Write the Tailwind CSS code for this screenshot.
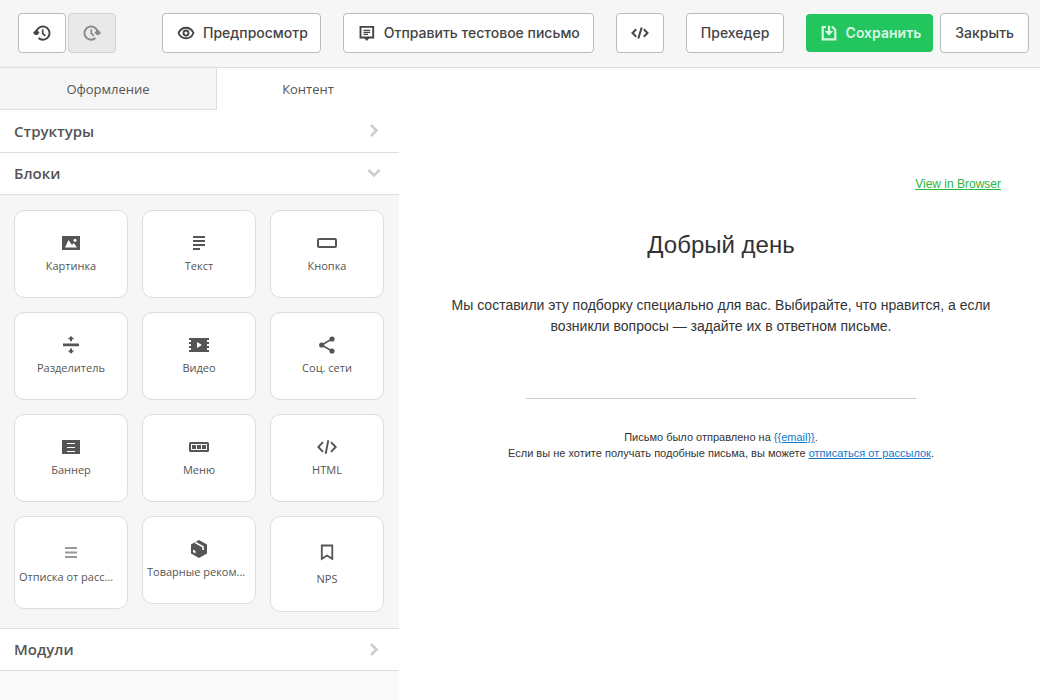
<!DOCTYPE html>
<html lang="ru">
  <head>
    <meta charset="UTF-8" />
    <meta name="viewport" content="width=device-width, initial-scale=1.0" />
    <title>Редактор письма</title>
    <script src="https://cdn.jsdelivr.net/npm/@tailwindcss/browser@4"></script>
  </head>
  <body class="min-h-screen flex flex-col bg-white font-['Open_Sans','Noto_Sans',sans-serif] text-[#555]">
    <!-- Toolbar -->
    <header class="flex items-center h-[68px] pl-[18px] pr-[11px] pb-[2px] bg-[#f6f6f6] border-b border-[#ddd] font-[Inter,sans-serif] text-sm font-medium text-[#444] whitespace-nowrap">
      <div class="flex gap-[2px]">
        <button aria-label="Отменить" class="w-12 h-10 flex items-center justify-center bg-white border border-[#bbb] rounded">
          <svg class="w-[18px] h-[18px]" viewBox="0 0 18 18" fill="none" stroke="currentColor" stroke-width="1.9"><path d="M3.300 9a6.600 6.600 0 1 1 2.200 5"/><path d="M9.700 5.300v4l2.600 2.600" stroke-width="1.600"/><path d="M0 8.500L3.300 5.800 6.500 8.500 4.300 11H2z" fill="currentColor" stroke="none"/></svg>
        </button>
        <button aria-label="Повторить" disabled class="w-12 h-10 flex items-center justify-center bg-[#e9e9e9] border border-[#d3d3d3] rounded text-[#888]">
          <svg class="w-[18px] h-[18px]" viewBox="0 0 18 18" fill="none" stroke="currentColor" stroke-width="1.9"><path d="M14.700 9a6.600 6.600 0 1 0-2.200 5"/><path d="M8.300 5.300v4l2.600 2.600" stroke-width="1.600"/><path d="M18 8.500l-3.300-2.700-3.200 2.700 2.200 2.500H16z" fill="currentColor" stroke="none"/></svg>
        </button>
      </div>
      <button class="ml-[46px] h-10 pl-[14px] pr-3 flex items-center gap-2 bg-white border border-[#bbb] rounded">
        <svg class="w-[18px] h-[18px]" viewBox="0 0 18 18" fill="none" stroke="currentColor" stroke-width="1.9"><path d="M1.500 9C3 5.500 5.800 3.700 9 3.700S15 5.500 16.500 9C15 12.500 12.200 14.300 9 14.300S3 12.500 1.500 9z"/><circle cx="9" cy="9" r="2.500"/></svg>
        Предпросмотр
      </button>
      <button class="ml-[22px] h-10 pl-[14px] pr-[13px] flex items-center gap-2 bg-white border border-[#bbb] rounded">
        <svg class="w-[18px] h-[18px]" viewBox="0 0 18 18" fill="none" stroke="currentColor" stroke-width="1.9"><path d="M2.500 2.900h12.700v10.600H2.500z"/><path d="M5.500 6.300h6.700M5.500 8.300h6.700M5.500 10.300h4.500" stroke-width="1.200"/><path d="M5.800 13.500h6L8.800 17z" fill="currentColor" stroke="none"/></svg>
        Отправить тестовое письмо
      </button>
      <button aria-label="HTML-код" class="ml-[22px] w-12 h-10 flex items-center justify-center bg-white border border-[#bbb] rounded">
        <svg class="w-[18px] h-[18px]" viewBox="0 0 18 18" fill="none" stroke="currentColor" stroke-width="2"><path d="M5.200 5.200L1.500 9l3.700 3.800M12.800 5.200L16.500 9l-3.700 3.800M10.700 3.500l-3.400 11"/></svg>
      </button>
      <button class="ml-[22px] h-10 px-[14px] bg-white border border-[#bbb] rounded">Прехедер</button>
      <button class="ml-auto h-[38px] pl-[14px] pr-3 flex items-center gap-2 bg-[#22c55e] rounded-sm text-[#d9f6e3] font-semibold">
        <svg class="w-[18px] h-[18px]" viewBox="0 0 18 18" fill="none" stroke="currentColor" stroke-width="2.200"><path d="M6 3H2.700v12.300h12.600V6L12.500 3H11.500"/><path d="M9 1.800V8"/><path d="M4.800 7h8.400L9 11.800z" fill="currentColor" stroke="none"/></svg>
        Сохранить
      </button>
      <button class="ml-[7px] h-10 px-[14px] bg-white border border-[#bbb] rounded">Закрыть</button>
    </header>

    <div class="flex flex-1">
      <!-- Sidebar -->
      <aside class="w-[399px] shrink-0 bg-[#fafafa]">
        <div class="flex bg-white text-[13px]">
          <button class="w-[217px] h-[42px] pt-[2px] bg-[#f6f6f6] border-r border-b border-[#ddd]">Оформление</button>
          <button class="w-[182px] h-[42px] pt-[2px]">Контент</button>
        </div>
        <button class="w-full h-[43px] pl-[14px] pr-[17px] flex items-center justify-between bg-white border-b border-[#ddd] text-[15px] font-semibold">
          Структуры
          <svg class="w-4 h-4 text-[#ccc]" viewBox="0 0 16 16" fill="none" stroke="currentColor" stroke-width="2.500"><path d="M5 2l5.500 5.500L5 13"/></svg>
        </button>
        <button class="w-full h-[42px] pl-[14px] pr-[17px] flex items-center justify-between bg-white border-b border-[#ddd] text-[15px] font-semibold">
          Блоки
          <svg class="w-4 h-4 text-[#ccc]" viewBox="0 0 16 16" fill="none" stroke="currentColor" stroke-width="2.500"><path d="M2.500 4L8 9.500 13.500 4"/></svg>
        </button>

        <!-- Blocks -->
        <div class="grid grid-cols-3 items-start gap-[14px] pl-[14px] pr-[15px] pt-[15px] pb-4 bg-[#f6f6f6] text-[11px] leading-[18px]">
          <div draggable="true" class="h-[88px] px-1 flex flex-col items-center justify-center gap-1 bg-white border border-[#ddd] rounded-[10px]">
            <svg class="w-5 h-5" viewBox="0 0 20 20" fill="currentColor"><path d="M1 3h18v14H1z"/><path d="M4 14.500L7.500 7l3.500 5 1.800-2 3.200 4.500z" fill="white"/><circle cx="14" cy="7.300" r="1.500" fill="white"/></svg>
            <span>Картинка</span>
          </div>
          <div draggable="true" class="h-[88px] px-1 flex flex-col items-center justify-center gap-1 bg-white border border-[#ddd] rounded-[10px]">
            <svg class="w-5 h-5" viewBox="0 0 20 20" fill="none" stroke="currentColor" stroke-width="1.800"><path d="M4 4h12M4 8h12M4 12h12M4 16h7"/></svg>
            <span>Текст</span>
          </div>
          <div draggable="true" class="h-[88px] px-1 flex flex-col items-center justify-center gap-1 bg-white border border-[#ddd] rounded-[10px]">
            <svg class="w-5 h-5" viewBox="0 0 20 20" fill="none" stroke="currentColor" stroke-width="2"><rect x="1" y="6" width="18" height="8" rx="1"/></svg>
            <span>Кнопка</span>
          </div>
          <div draggable="true" class="h-[88px] px-1 flex flex-col items-center justify-center gap-1 bg-white border border-[#ddd] rounded-[10px]">
            <svg class="w-5 h-5" viewBox="0 0 20 20" fill="currentColor"><path d="M2 8.500h16v2.800H2zM10 1l3.300 3.300H11v2H9v-2H6.700zM10 18.800l3.300-3.300H11v-2H9v2H6.700z"/></svg>
            <span>Разделитель</span>
          </div>
          <div draggable="true" class="h-[88px] px-1 flex flex-col items-center justify-center gap-1 bg-white border border-[#ddd] rounded-[10px]">
            <svg class="w-5 h-5" viewBox="0 0 20 20" fill="currentColor"><path d="M2 3h16v14H2z"/><path d="M1 3v14M19 3v14" stroke="currentColor" stroke-width="2" stroke-dasharray="2"/><path d="M8 7l5 3-5 3z" fill="white"/></svg>
            <span>Видео</span>
          </div>
          <div draggable="true" class="h-[88px] px-1 flex flex-col items-center justify-center gap-1 bg-white border border-[#ddd] rounded-[10px]">
            <svg class="w-5 h-5" viewBox="0 0 20 20" fill="currentColor"><path d="M15 4L4.500 10 15 16" fill="none" stroke="currentColor" stroke-width="1.500"/><circle cx="4.700" cy="10" r="2.600"/><circle cx="15" cy="4" r="2.600"/><circle cx="15" cy="16" r="2.600"/></svg>
            <span>Соц. сети</span>
          </div>
          <div draggable="true" class="h-[88px] px-1 flex flex-col items-center justify-center gap-1 bg-white border border-[#ddd] rounded-[10px]">
            <svg class="w-5 h-5" viewBox="0 0 20 20" fill="currentColor"><path d="M1 3h18v14H1z"/><path d="M6 6.500h8M6 10.500h8M6 14.500h8" stroke="white" stroke-width="1.200"/></svg>
            <span>Баннер</span>
          </div>
          <div draggable="true" class="h-[88px] px-1 flex flex-col items-center justify-center gap-1 bg-white border border-[#ddd] rounded-[10px]">
            <svg class="w-5 h-5" viewBox="0 0 20 20" fill="currentColor"><rect y="5" width="20" height="10" rx="1.500"/><path d="M2 7h16v6H2z" fill="white"/><path d="M3 8h4v4H3zM8 8h4v4H8zM13 8h4v4h-4z"/></svg>
            <span>Меню</span>
          </div>
          <div draggable="true" class="h-[88px] px-1 flex flex-col items-center justify-center gap-1 bg-white border border-[#ddd] rounded-[10px]">
            <svg class="w-5 h-5" viewBox="0 0 20 20" fill="none" stroke="currentColor" stroke-width="1.900"><path d="M6 5.200L1.300 10 6 14.800M14 5.200l4.700 4.800-4.700 4.800M11.300 3.300L8.700 16.700"/></svg>
            <span>HTML</span>
          </div>
          <div draggable="true" title="Отписка от рассылок" class="h-[93px] px-1 flex flex-col items-center justify-center gap-1 bg-white border border-[#ddd] rounded-[10px]">
            <svg class="w-6 h-6 text-[#999]" viewBox="0 0 24 24" fill="none" stroke="currentColor" stroke-width="1.900"><path d="M6 8h12M6 12.500h12M6 17h12"/></svg>
            <span class="w-full whitespace-nowrap">Отписка от расс...</span>
          </div>
          <div draggable="true" title="Товарные рекомендации" class="h-[88px] px-1 flex flex-col items-center justify-center gap-1 bg-white border border-[#ddd] rounded-[10px]">
            <svg class="w-5 h-5" viewBox="0 0 20 20" fill="currentColor"><path d="M10 1l8 4.500v9L10 19l-8-4.500v-9z"/><path d="M6.300 3.500l7.700 4.300V11" fill="none" stroke="white" stroke-width="1.600"/><path d="M4 10.500l2.500 1.500v2.500L4 13z" fill="white"/></svg>
            <span class="w-full whitespace-nowrap">Товарные реком...</span>
          </div>
          <div draggable="true" class="h-24 px-1 flex flex-col items-center justify-center gap-[6px] bg-white border border-[#ddd] rounded-[10px]">
            <svg class="w-6 h-6" viewBox="0 0 24 24" fill="none" stroke="currentColor" stroke-width="1.800"><path d="M6.800 5.500h10.500v13.300L12 15.500l-5.200 3.300z"/></svg>
            <span>NPS</span>
          </div>
        </div>
        <button class="w-full h-[43px] pl-[14px] pr-[17px] flex items-center justify-between bg-white border-y border-[#ddd] text-[15px] font-semibold">
          Модули
          <svg class="w-4 h-4 text-[#ccc]" viewBox="0 0 16 16" fill="none" stroke="currentColor" stroke-width="2.500"><path d="M5 2l5.500 5.500L5 13"/></svg>
        </button>
      </aside>

      <!-- Letter -->
      <main class="flex-1 pl-[3px] font-['Liberation_Sans',Arial,sans-serif] text-[#333]">
        <div class="max-w-[600px] mx-auto px-5 pt-[107px] text-center">
          <p class="text-right text-xs leading-[18px]"><a href="#" class="text-[#2cb543] underline">View in Browser</a></p>
          <h1 class="mt-[37px] text-2xl leading-[29px]">Добрый день</h1>
          <p class="mt-9 text-sm leading-[21px]">Мы составили эту подборку специально для вас. Выбирайте, что нравится, а если возникли вопросы — задайте их в ответном письме.</p>
          <hr class="w-[390px] mx-auto mt-[61px] border-[#ccc]" />
          <p class="mt-[30px] text-[11px] leading-4">
            Письмо было отправлено на <a href="#" class="text-[#1376c8] underline">{{email}}</a>.<br />
            Если вы не хотите получать подобные письма, вы можете <a href="#" class="text-[#1376c8] underline">отписаться от рассылок</a>.
          </p>
        </div>
      </main>
    </div>
  </body>
</html>
